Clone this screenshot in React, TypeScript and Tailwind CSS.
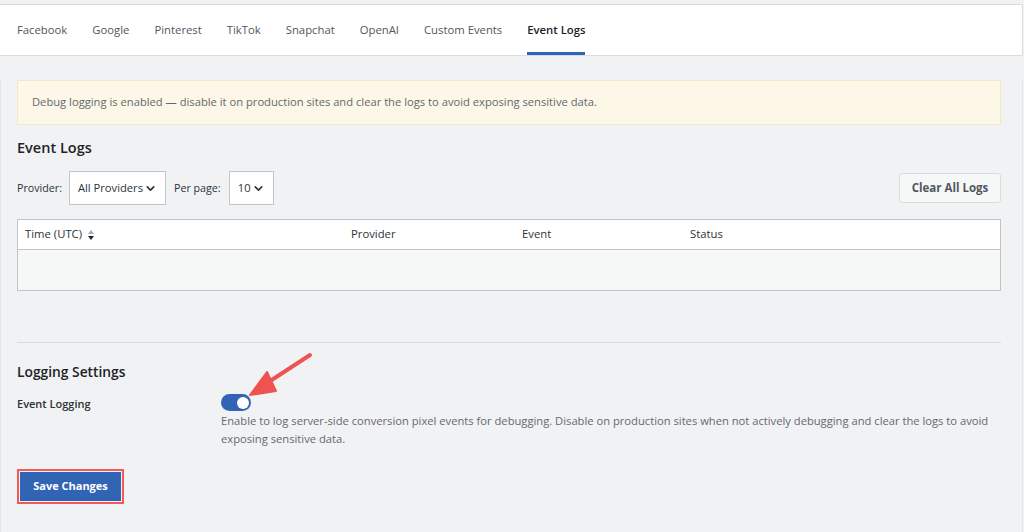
import { ChevronDown } from "lucide-react";

const tabs = ["Facebook", "Google", "Pinterest", "TikTok", "Snapchat", "OpenAI", "Custom Events", "Event Logs"];

export default function App() {
  return (
    <div
      className="relative h-[532px] w-[1024px] overflow-hidden bg-[#f1f2f4] text-[12px] text-[#3c434a]"
      style={{ fontFamily: '"Open Sans", "Noto Sans", sans-serif' }}
    >
      <div className="h-[4px] bg-[#f1f2f4]" />
      <div className="flex h-[52px] w-[1023px] border-y border-r border-[#dcdcde] bg-white pl-[17px] gap-[25px]">
        {tabs.map((t) => {
          const active = t === "Event Logs";
          return (
            <div
              key={t}
              className={`flex h-full items-center border-b-[3px] pt-[3px] text-[11.3px] ${
                active ? "border-[#2f65b8] font-semibold text-[#1d2327]" : "border-transparent font-medium text-[#50575e]"
              }`}
            >
              {t}
            </div>
          );
        })}
      </div>

      <div className="h-[476px] w-[1023px] border-x border-[#e2e4e7] pl-[16px] pr-[21px]">
        {/* notice */}
        <div className="mt-[24px] flex h-[45px] items-center border border-[#f3e7c5] bg-[#fcf7e6] px-[14px] text-[11.2px] text-[#646970]">
          Debug logging is enabled — disable it on production sites and clear the logs to avoid exposing sensitive data.
        </div>

        <h2 className="mt-[13px] text-[14.5px] font-semibold leading-[20px] text-[#1d2327]">Event Logs</h2>

        <div className="mt-[13px] flex items-center">
          <span className="text-[10.7px] font-medium text-[#2c3338]">Provider:</span>
          <div className="ml-[7px] flex h-[34px] w-[97px] items-center justify-center border border-[#c3c4c7] bg-white text-[11.2px] text-[#2c3338]">
            All Providers
            <ChevronDown className="ml-[1px] h-[13px] w-[13px]" strokeWidth={3} />
          </div>
          <span className="ml-[8px] text-[10.7px] font-medium text-[#2c3338]">Per page:</span>
          <div className="ml-[8px] flex h-[34px] w-[45px] items-center justify-center border border-[#c3c4c7] bg-white text-[11.2px] text-[#2c3338]">
            10
            <ChevronDown className="ml-[1px] h-[13px] w-[13px]" strokeWidth={3} />
          </div>
          <button className="ml-auto flex h-[30px] w-[102px] items-center justify-center rounded-[3px] border border-[#dcdcde] bg-[#f6f7f7] text-[11.5px] font-bold text-[#50575e]">
            Clear All Logs
          </button>
        </div>

        {/* table */}
        <div className="mt-[14px] border border-[#c3c4c7]">
          <div className="flex h-[30px] items-center border-b border-[#c3c4c7] bg-white text-[11.3px] text-[#2c3338]">
            <div className="flex w-[333px] items-center pl-[7px]">
              Time (UTC)
              <svg width="8" height="12" viewBox="0 0 8 12" className="ml-[5px]">
                <path d="M4 1 L7 5 L1 5 Z" fill="#a7aaad" />
                <path d="M4 11 L7 7 L1 7 Z" fill="#1d2327" />
              </svg>
            </div>
            <div className="w-[171px]">Provider</div>
            <div className="w-[168px]">Event</div>
            <div>Status</div>
          </div>
          <div className="h-[40px] bg-[#f6f7f7]" />
        </div>

        <div className="mt-[51px] border-t border-[#dcdcde]" />

        <h2 className="mt-[19px] text-[13.8px] font-semibold leading-[20px] text-[#1d2327]">Logging Settings</h2>

        <div className="mt-[12px] flex">
          <div className="w-[204px] shrink-0 pt-[2px] text-[11px] font-semibold text-[#2c3338]">Event Logging</div>
          <div>
            <div className="flex h-[17px] w-[30px] items-center justify-end rounded-full bg-[#3264b6] pr-[2px]">
              <div className="h-[12px] w-[12px] rounded-full bg-white" />
            </div>
            <p className="mt-[1px] text-[11.2px] leading-[18px] text-[#646970]">
              Enable to log server-side conversion pixel events for debugging. Disable on production sites when not actively debugging and clear the logs to avoid exposing sensitive data.
            </p>
          </div>
        </div>

        <div className="mt-[21px] inline-block border-[2px] border-[#ef5a5a] p-[1px]">
          <button className="flex h-[29px] w-[101px] items-center justify-center bg-[#3264b6] text-[11px] font-bold text-white">
            Save Changes
          </button>
        </div>
      </div>

      {/* annotation arrow */}
      <svg className="absolute left-0 top-0" width="1024" height="532" viewBox="0 0 1024 532" fill="none">
        <line x1="310" y1="355" x2="264" y2="385" stroke="#ef5350" strokeWidth="4" strokeLinecap="round" />
        <path d="M267 372 L250 395 L276 391 Z" fill="#ef5350" stroke="#ef5350" strokeWidth="2" strokeLinejoin="round" />
      </svg>
    </div>
  );
}
